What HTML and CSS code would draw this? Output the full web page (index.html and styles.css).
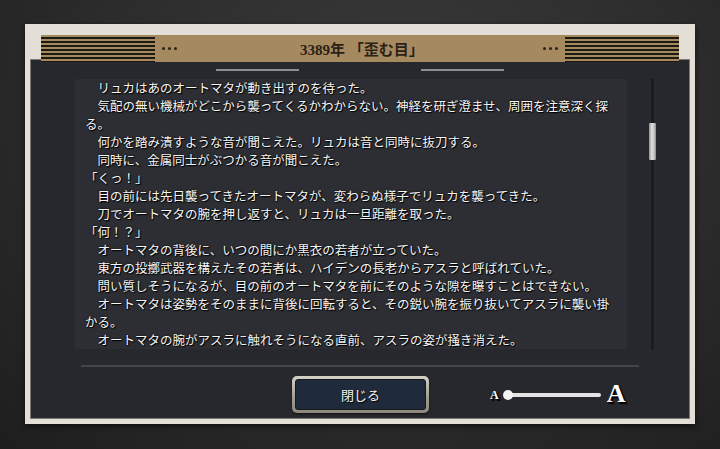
FILE: index.html
```html
<!DOCTYPE html>
<html lang="ja">
<head>
<meta charset="utf-8">
<title>3389年 「歪む目」</title>
<link rel="stylesheet" href="styles.css">
</head>
<body>
<div class="screen">
  <div class="frame">
    <div class="titlebar">
      <div class="stripes"></div>
      <div class="dots"><i></i><i></i><i></i></div>
      <div class="title">3389年 「歪む目」</div>
      <div class="dots"><i></i><i></i><i></i></div>
      <div class="stripes"></div>
    </div>
    <div class="panel">
      <div class="tabs"><span class="tab"></span><span class="tab"></span></div>
      <div class="content">
        <div class="textbox">
          <div class="text">
            <p>　リュカはあのオートマタが動き出すのを待った。</p>
            <p>　気配の無い機械がどこから襲ってくるかわからない。神経を研ぎ澄ませ、周囲を注意深く探る。</p>
            <p>　何かを踏み潰すような音が聞こえた。リュカは音と同時に抜刀する。</p>
            <p>　同時に、金属同士がぶつかる音が聞こえた。</p>
            <p>「くっ！」</p>
            <p>　目の前には先日襲ってきたオートマタが、変わらぬ様子でリュカを襲ってきた。</p>
            <p>　刀でオートマタの腕を押し返すと、リュカは一旦距離を取った。</p>
            <p>「何！？」</p>
            <p>　オートマタの背後に、いつの間にか黒衣の若者が立っていた。</p>
            <p>　東方の投擲武器を構えたその若者は、ハイデンの長老からアスラと呼ばれていた。</p>
            <p>　問い質しそうになるが、目の前のオートマタを前にそのような隙を曝すことはできない。</p>
            <p>　オートマタは姿勢をそのままに背後に回転すると、その鋭い腕を振り抜いてアスラに襲い掛かる。</p>
            <p>　オートマタの腕がアスラに触れそうになる直前、アスラの姿が掻き消えた。</p>
          </div>
        </div>
        <div class="scrollbar"><div class="thumb"></div></div>
      </div>
      <div class="sep"></div>
      <div class="controls">
        <button class="close"><span class="close-inner">閉じる</span></button>
        <div class="fontsize">
          <span class="a-small">A</span>
          <div class="track"><span class="knob"></span></div>
          <span class="a-large">A</span>
        </div>
      </div>
    </div>
  </div>
</div>
</body>
</html>
```

FILE: styles.css
```css
html, body {
  margin: 0;
  padding: 0;
}
body {
  width: 720px;
  height: 449px;
  overflow: hidden;
  background: radial-gradient(ellipse at 55% 25%, #3a3a3a 0%, #2c2c2c 55%, #1e1e1e 100%);
  font-family: "Noto Sans CJK JP", sans-serif;
}
.screen {
  width: 720px;
  height: 449px;
  padding-top: 24px;
  box-sizing: border-box;
  display: flex;
  justify-content: center;
  align-items: flex-start;
}
.frame {
  width: 670px;
  height: 400px;
  box-sizing: border-box;
  padding: 11px 6px 6px;
  background: #e3dfd7;
  box-shadow: 0 2px 6px rgba(0,0,0,0.6);
  display: flex;
  flex-direction: column;
}
.titlebar {
  position: relative;
  z-index: 1;
  height: 27px;
  margin: 0 10px -2px;
  background: #a68a5f;
  display: flex;
  align-items: center;
}
.stripes {
  width: 114px;
  height: 27px;
  background: repeating-linear-gradient(to bottom, #a68a5f 0 2px, #1d1913 2px 4px);
}
.dots {
  display: flex;
  gap: 3px;
  margin: 0 7px;
}
.dots i {
  display: block;
  width: 3px;
  height: 3px;
  border-radius: 50%;
  background: #2a2118;
}
.title {
  flex: 1;
  text-align: center;
  font-family: "Liberation Serif", "Noto Sans CJK JP", serif;
  font-weight: bold;
  font-size: 15px;
  color: #2a2118;
  padding-left: 4px;
}
.panel {
  height: 358px;
  background: #27282d;
  box-shadow: 0 0 0 1px #7d7a73;
  box-sizing: border-box;
  padding-top: 9px;
}
.tabs {
  display: flex;
  justify-content: center;
  gap: 122px;
  height: 2px;
}
.tab {
  width: 83px;
  height: 2px;
  background: #8e8f94;
}
.content {
  display: flex;
  margin-top: 7px;
  padding-left: 44px;
  height: 272px;
}
.textbox {
  width: 552px;
  height: 270px;
  margin-top: 1px;
  background: #2d2e33;
  box-sizing: border-box;
  padding-left: 10px;
  overflow: hidden;
}
.text {
  width: 527px;
  font-size: 12.5px;
  line-height: 18px;
  color: #f6f6f6;
  text-shadow: 1px 1px 1px #000, 0 0 2px #000;
}
.text p {
  margin: 0;
}
.scrollbar {
  position: relative;
  width: 7px;
  height: 272px;
  margin-left: 22px;
  display: flex;
  justify-content: center;
}
.scrollbar::before {
  content: "";
  width: 3px;
  height: 272px;
  background: #1a1b1f;
  border-radius: 2px;
}
.thumb {
  position: absolute;
  left: 0;
  top: 45px;
  width: 7px;
  height: 37px;
  border-radius: 1px;
  background: linear-gradient(to right, #8f8f8f, #e0e0e0 40%, #c8c8c8 70%, #8a8a8a);
}
.sep {
  width: 558px;
  height: 2px;
  margin: 15px 0 0 50px;
  background: #45464c;
}
.controls {
  display: flex;
  align-items: center;
  margin-top: 9px;
  padding-left: 261px;
}
.close {
  width: 137px;
  height: 37px;
  padding: 3px;
  border: none;
  border-radius: 5px;
  background: linear-gradient(to bottom, #d5d1c6, #a19c90 60%, #8c887d);
  box-shadow: 0 1px 2px rgba(0,0,0,0.6);
  display: flex;
  cursor: pointer;
}
.close-inner {
  flex: 1;
  display: flex;
  align-items: center;
  justify-content: center;
  border-radius: 3px;
  border: 1px solid #15181e;
  background: #1f2a3a;
  color: #f3f3f3;
  font-family: "Noto Sans CJK JP", sans-serif;
  font-size: 13px;
  text-shadow: 1px 1px 1px #000;
}
.fontsize {
  display: flex;
  align-items: center;
  margin-left: 61px;
}
.a-small, .a-large {
  font-family: "Liberation Serif", serif;
  font-weight: bold;
  color: #fff;
  text-shadow: 1px 1px 1px #000, 2px 2px 1px #000;
  line-height: 1;
}
.a-small {
  font-size: 12px;
}
.a-large {
  font-size: 26px;
  margin-left: 6px;
  margin-top: -2px;
}
.track {
  position: relative;
  width: 93px;
  height: 4px;
  margin-left: 9px;
  border-radius: 2px;
  background: #e4e4e4;
}
.knob {
  position: absolute;
  left: -5px;
  top: -3px;
  width: 10px;
  height: 10px;
  border-radius: 50%;
  background: #f4f4f4;
}
```
